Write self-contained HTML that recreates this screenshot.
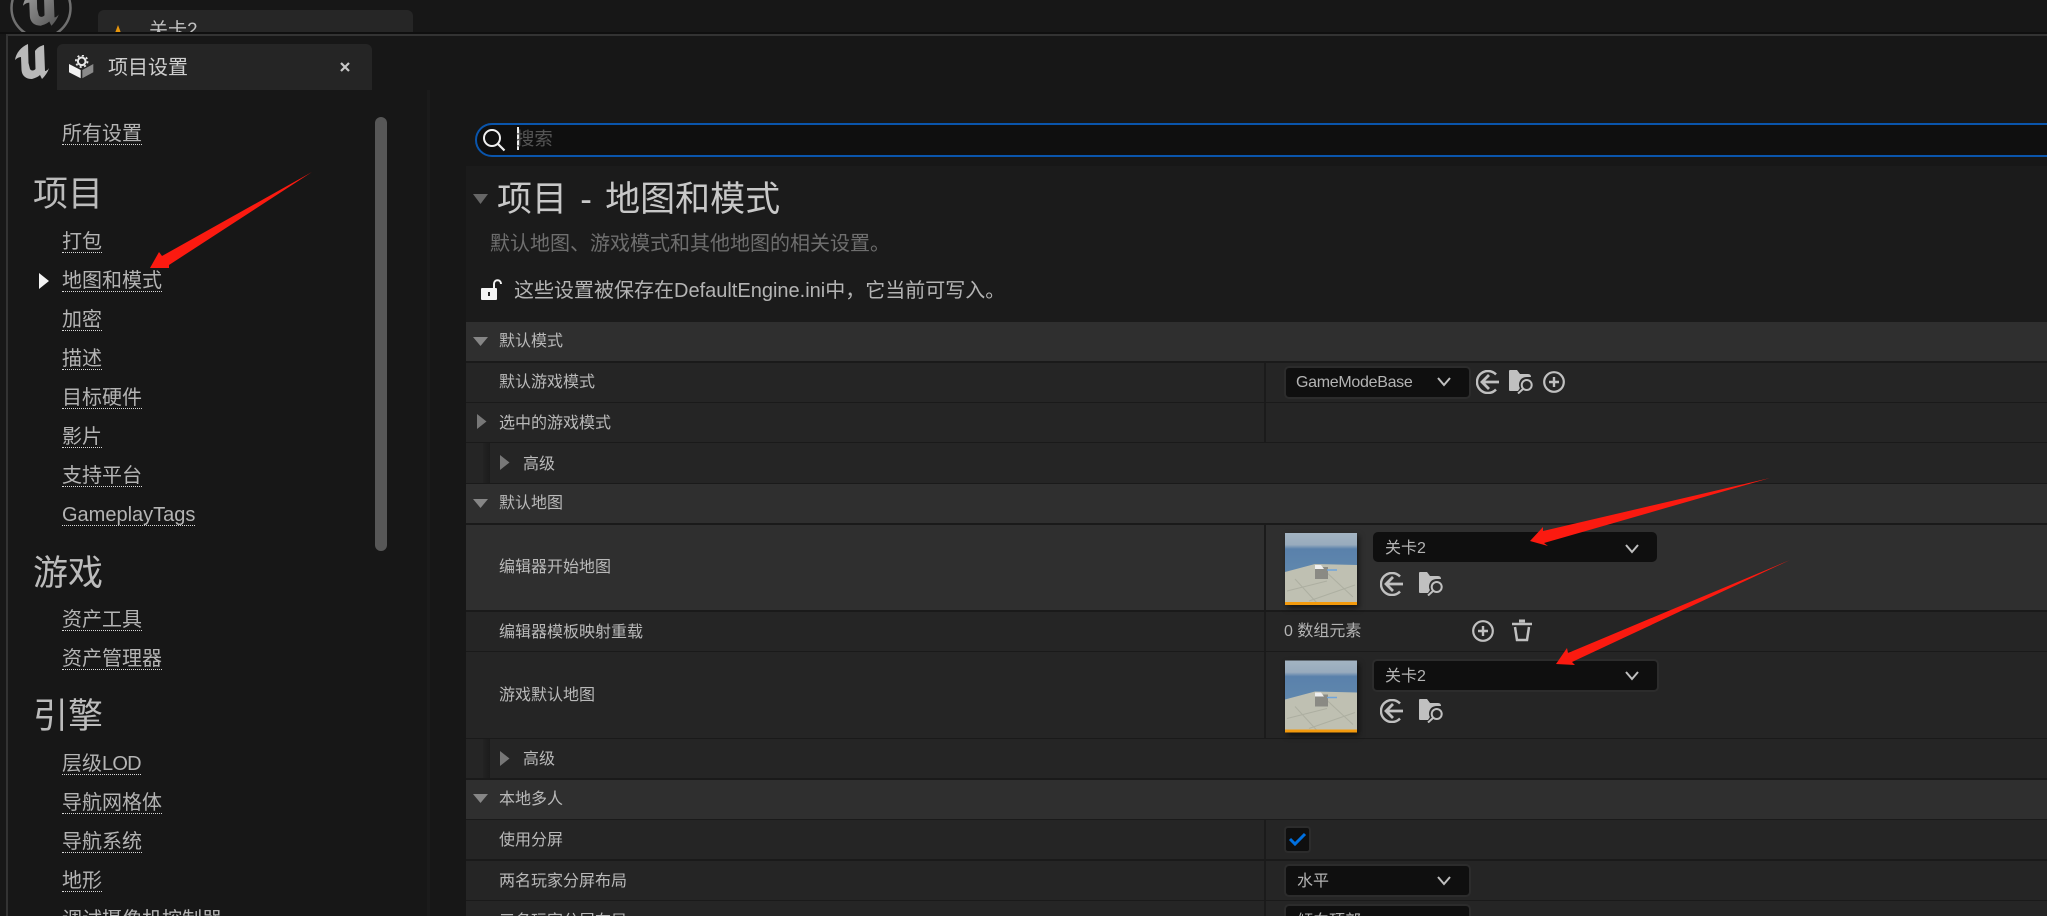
<!DOCTYPE html>
<html lang="zh-CN">
<head>
<meta charset="utf-8">
<title>项目设置</title>
<style>
html,body{margin:0;padding:0;background:#171717;}
#p{position:relative;width:2047px;height:916px;overflow:hidden;background:#171717;font-family:"Liberation Sans","Noto Sans CJK SC",sans-serif;color:#bdbdbd;}
#p div,#p span.a,#p svg{position:absolute;}
.t{white-space:nowrap;line-height:24px;height:24px;}
.n{left:62px;font-size:20px;color:#b4b4b4;border-bottom:1px dotted #d8d8d8;line-height:29px;height:24px;white-space:nowrap;}
.h{left:33px;font-size:35px;line-height:46px;height:44px;color:#bcbcbc;white-space:nowrap;}
.r{left:466px;width:1581px;background:#252525;}
.c{background:#2f2f2f;}
.l{left:499px;font-size:16px;color:#b9b9b9;line-height:22px;height:20px;white-space:nowrap;}
.s{left:1264px;width:2px;background:#1b1b1b;}
.d{background:#0f0f0f;border-radius:5px;box-sizing:border-box;}
.b{border:2px solid #2c2c2c;}
.v{font-size:16px;color:#b4b4b4;line-height:22px;height:20px;white-space:nowrap;}
.i{fill:none;stroke:#c0c0c0;}
</style>
</head>
<body>
<div id="p">

<!-- background app -->
<svg style="left:0;top:0" width="90" height="32" viewBox="0 0 90 32">
<defs><linearGradient id="lg" x1="0" y1="0" x2="1" y2="1"><stop offset="0" stop-color="#a0a0a0"/><stop offset="1" stop-color="#555"/></linearGradient></defs>
<circle cx="41" cy="8" r="29.500" fill="none" stroke="#6f6f6f" stroke-width="2.500"/>
<path transform="translate(23,-11) scale(1.050)" d="M13 0 C6 3 1 9 0 16 C2 14 4 13 6 13 L6.500 26 C7 32 11 35 17 35 C20 34 23 33 25 31 L27 35 C30 32 33 28 34 24 C33 26 31 27 30 27 L29 1 C25 2 22 4 20 7 L20.500 25 C19 27 16 27 15 25 L13.500 19Z" fill="url(#lg)"/></svg>
<div style="left:98px;top:10px;width:315px;height:24px;background:#262626;border-radius:6px 6px 0 0"></div>
<svg style="left:110px;top:22px" width="20" height="12"><path d="M8 3 L11 11 H5Z" fill="#e8960c"/></svg>
<div class="t" style="left:149px;top:19px;font-size:19px;color:#c0c0c0">关卡2</div>

<!-- window -->
<div style="left:0;top:32px;width:2047px;height:2px;background:#0f0f0f"></div>
<div style="left:6px;top:34px;width:2041px;height:882px;background:#171717;border-top:2px solid #333;border-left:2px solid #333;box-sizing:border-box"></div>

<!-- UE logo -->
<svg style="left:15px;top:44px" width="35" height="36" viewBox="0 0 35 36"><path d="M13 0 C6 3 1 9 0 16 C2 14 4 13 6 13 L6.500 26 C7 32 11 35 17 35 C20 34 23 33 25 31 L27 35 C30 32 33 28 34 24 C33 26 31 27 30 27 L29 1 C25 2 22 4 20 7 L20.500 25 C19 27 16 27 15 25 L13.500 19Z" fill="#b9b9b9"/></svg>

<!-- tab -->
<div style="left:57px;top:44px;width:315px;height:46px;background:#252525;border-radius:6px 6px 0 0"></div>
<svg style="left:68px;top:55px" width="27" height="25" viewBox="0 0 27 25">
<circle cx="13.700" cy="6.300" r="3.800" fill="none" stroke="#e8e8e8" stroke-width="2"/>
<circle cx="13.700" cy="6.300" r="5.800" fill="none" stroke="#e8e8e8" stroke-width="1.800" stroke-dasharray="2 2.550"/>
<path d="M1 9 L12.700 15 V23.300 L1 17.300Z" fill="#f2f2f2"/><path d="M14.300 15 L25.300 9 V17.300 L14.300 23.300Z" fill="#8a8a8a"/>
</svg>
<div class="t" style="left:108px;top:56px;font-size:20px;color:#cfcfcf">项目设置</div>
<svg style="left:339px;top:61px" width="12" height="12"><path d="M2 2 L10 10 M10 2 L2 10" stroke="#c8c8c8" stroke-width="2.200"/></svg>

<!-- sidebar -->
<div class="n" style="top:120px">所有设置</div>
<div class="h" style="top:172px">项目</div>
<div class="n" style="top:228px">打包</div>
<svg style="left:38px;top:272px" width="12" height="18"><path d="M1 1 L11 9 L1 17Z" fill="#f4f4f4"/></svg>
<div class="n" style="top:267px">地图和模式</div>
<div class="n" style="top:306px">加密</div>
<div class="n" style="top:345px">描述</div>
<div class="n" style="top:384px">目标硬件</div>
<div class="n" style="top:423px">影片</div>
<div class="n" style="top:462px">支持平台</div>
<div class="n" style="top:501px">GameplayTags</div>
<div class="h" style="top:551px">游戏</div>
<div class="n" style="top:606px">资产工具</div>
<div class="n" style="top:645px">资产管理器</div>
<div class="h" style="top:694px">引擎</div>
<div class="n" style="top:750px">层级<span style="letter-spacing:-.8px">LOD</span></div>
<div class="n" style="top:789px">导航网格体</div>
<div class="n" style="top:828px">导航系统</div>
<div class="n" style="top:867px">地形</div>
<div class="n" style="top:906px">调试摄像机控制器</div>
<div style="left:375px;top:117px;width:12px;height:434px;background:#575757;border-radius:6px"></div>
<div style="left:427px;top:90px;width:3px;height:826px;background:#1b1b1b"></div>

<!-- search -->
<div style="left:475px;top:123px;width:1600px;height:34px;box-sizing:border-box;background:#0f0f0f;border:2px solid #0a55ac;border-radius:17px"></div>
<svg style="left:480px;top:127px" width="26" height="25" viewBox="0 0 26 25"><circle cx="12" cy="11" r="8" fill="none" stroke="#f0f0f0" stroke-width="2"/><path d="M18 17 L24.500 23.500" stroke="#f0f0f0" stroke-width="2.200"/></svg>
<div style="left:517px;top:127px;width:2px;height:23px;background:#f0f0f0"></div>
<div class="t" style="left:516px;top:127px;font-size:18.400px;color:#555">搜索</div>

<!-- content head -->
<div style="left:466px;top:166px;width:1581px;height:156px;background:#1b1b1b"></div>
<svg style="left:473px;top:194px" width="16" height="10"><path d="M0 0 H15 L7.500 10Z" fill="#666"/></svg>
<div class="t" style="left:497px;top:178px;font-size:35px;line-height:44px;height:44px;color:#c8c8c8;word-spacing:3.500px">项目 - 地图和模式</div>
<div class="t" style="left:490px;top:232px;font-size:20px;color:#6e6e6e">默认地图、游戏模式和其他地图的相关设置。</div>
<svg style="left:480px;top:278px" width="23" height="23" viewBox="0 0 23 23"><path d="M14 10 V6 C14 1 21 1 21 6" fill="none" stroke="#f2f2f2" stroke-width="2"/><rect x="1" y="10" width="16" height="12" rx="1" fill="#f4f4f4"/><rect x="8" y="14" width="2" height="4" fill="#222"/></svg>
<div class="t" style="left:514px;top:279px;font-size:20px;color:#b4b4b4">这些设置被保存在DefaultEngine.ini中，它当前可写入。</div>

<!-- rows -->
<div style="left:466px;top:322px;width:1581px;height:594px;background:#1a1a1a"></div>
<div class="r c" style="top:322px;height:39px"></div>
<div class="r" style="top:363px;height:39px"></div>
<div class="r" style="top:403px;height:39px"></div>
<div class="r" style="top:443px;height:40px"></div>
<div class="r c" style="top:484px;height:39px"></div>
<div class="r c" style="top:525px;height:85px"></div>
<div class="r" style="top:612px;height:39px"></div>
<div class="r" style="top:652px;height:86px"></div>
<div class="r" style="top:739px;height:39px"></div>
<div class="r c" style="top:780px;height:39px"></div>
<div class="r" style="top:820px;height:39px"></div>
<div class="r" style="top:861px;height:39px"></div>
<div class="r" style="top:901px;height:15px"></div>
<div style="left:483px;top:443px;width:7px;height:40px;background:linear-gradient(90deg,#222,#1c1c1c)"></div>
<div style="left:483px;top:739px;width:7px;height:39px;background:linear-gradient(90deg,#222,#1c1c1c)"></div>
<div class="s" style="top:363px;height:39px"></div>
<div class="s" style="top:403px;height:39px"></div>
<div class="s" style="top:525px;height:85px"></div>
<div class="s" style="top:612px;height:39px"></div>
<div class="s" style="top:652px;height:86px"></div>
<div class="s" style="top:820px;height:39px"></div>
<div class="s" style="top:861px;height:39px"></div>
<div class="s" style="top:901px;height:15px"></div>

<svg style="left:473px;top:337px" width="16" height="10"><path d="M0 0 H15 L7.500 9Z" fill="#868686"/></svg>
<svg style="left:473px;top:499px" width="16" height="10"><path d="M0 0 H15 L7.500 9Z" fill="#868686"/></svg>
<svg style="left:473px;top:794px" width="16" height="10"><path d="M0 0 H15 L7.500 9Z" fill="#868686"/></svg>
<svg style="left:477px;top:414px" width="10" height="16"><path d="M0 0 L9.500 7.500 L0 15Z" fill="#777"/></svg>
<svg style="left:500px;top:455px" width="10" height="16"><path d="M0 0 L9.500 7.500 L0 15Z" fill="#777"/></svg>
<svg style="left:500px;top:751px" width="10" height="16"><path d="M0 0 L9.500 7.500 L0 15Z" fill="#777"/></svg>

<div class="l" style="top:331px">默认模式</div>
<div class="l" style="top:372px">默认游戏模式</div>
<div class="l" style="top:413px">选中的游戏模式</div>
<div class="l" style="left:523px;top:454px">高级</div>
<div class="l" style="top:493px">默认地图</div>
<div class="l" style="top:557px">编辑器开始地图</div>
<div class="l" style="top:622px">编辑器模板映射重载</div>
<div class="l" style="top:685px">游戏默认地图</div>
<div class="l" style="left:523px;top:749px">高级</div>
<div class="l" style="top:789px">本地多人</div>
<div class="l" style="top:830px">使用分屏</div>
<div class="l" style="top:871px">两名玩家分屏布局</div>
<div class="l" style="top:911px">三名玩家分屏布局</div>

<!-- default game mode -->
<div class="d b" style="left:1284px;top:366px;width:187px;height:33px"></div>
<div class="v" style="left:1296px;top:372px;letter-spacing:-.3px">GameModeBase</div>
<svg class="i" style="left:1436px;top:376px" width="16" height="12"><path d="M2 2 L8 9 L14 2" stroke-width="2"/></svg>
<svg class="i" style="left:1476px;top:370px" width="24" height="24"><path d="M20 4.500 A11 11 0 1 0 20 19.500" stroke-width="2.400"/><path d="M23 12 H6 M13 5 L6 12 L13 19" stroke-width="2.800"/></svg>
<svg style="left:1509px;top:370px" width="24" height="24"><path d="M0 1 Q0 0 1 0 H8 L11 4 H19 Q22 4 22 7 H18 Q11 7 10 14 Q10 17 11 18 L9 21 H1 Q0 21 0 20Z" fill="#c0c0c0"/><circle cx="17.700" cy="15" r="5" fill="none" stroke="#c0c0c0" stroke-width="2"/><path d="M14 19 L9 23.500" stroke="#c0c0c0" stroke-width="2"/></svg>
<svg class="i" style="left:1543px;top:371px" width="22" height="22"><circle cx="11" cy="11" r="9.800" stroke-width="2.200"/><path d="M11 6 V16 M6 11 H16" stroke-width="2.400"/></svg>

<!-- start map -->
<svg style="left:1285px;top:533px;filter:drop-shadow(2px 3px 3px rgba(0,0,0,.55))" width="72" height="72" viewBox="0 0 72 72">
<defs><linearGradient id="g" x1="0" y1="0" x2="0" y2="1"><stop offset="0" stop-color="#a3b4c2"/><stop offset=".28" stop-color="#98abbd"/><stop offset=".38" stop-color="#5a81ab"/><stop offset="1" stop-color="#6088ae"/></linearGradient></defs>
<rect width="72" height="42" fill="url(#g)"/><path d="M0 39 L30 31 L72 32 V72 H0Z" fill="#bfc0b2"/><path d="M10 46 L32 70 M40 38 L68 64 M2 58 L42 48 M24 68 L70 52" stroke="#adafa1" fill="none"/><path d="M30 34 H43 V46 H30Z" fill="#8a8a84"/><path d="M30 32 H36 L39 36 H30Z" fill="#f0f0f0"/><path d="M42 37 H52" stroke="#6ea4dc" stroke-width="1.500"/><rect y="69" width="72" height="3" fill="#f39a0d"/></svg>
<div class="d" style="left:1373px;top:532px;width:284px;height:30px"></div>
<div class="v" style="left:1385px;top:538px">关卡2</div>
<svg class="i" style="left:1624px;top:543px" width="16" height="12"><path d="M2 2 L8 9 L14 2" stroke-width="2"/></svg>
<svg class="i" style="left:1380px;top:572px" width="24" height="24"><path d="M20 4.500 A11 11 0 1 0 20 19.500" stroke-width="2.400"/><path d="M23 12 H6 M13 5 L6 12 L13 19" stroke-width="2.800"/></svg>
<svg style="left:1419px;top:572px" width="24" height="24"><path d="M0 1 Q0 0 1 0 H8 L11 4 H19 Q22 4 22 7 H18 Q11 7 10 14 Q10 17 11 18 L9 21 H1 Q0 21 0 20Z" fill="#c0c0c0"/><circle cx="17.700" cy="15" r="5" fill="none" stroke="#c0c0c0" stroke-width="2"/><path d="M14 19 L9 23.500" stroke="#c0c0c0" stroke-width="2"/></svg>

<!-- array -->
<div class="v" style="left:1284px;top:621px">0 数组元素</div>
<svg class="i" style="left:1472px;top:620px" width="22" height="22"><circle cx="11" cy="11" r="9.800" stroke-width="2.200"/><path d="M11 6 V16 M6 11 H16" stroke-width="2.400"/></svg>
<svg class="i" style="left:1512px;top:619px" width="20" height="23"><path d="M0 5 H20" stroke-width="2.500"/><path d="M7 2 H13" stroke-width="3"/><path d="M3 8 L5 21 H15 L17 8" stroke-width="2.500"/></svg>

<!-- game default map -->
<svg style="left:1285px;top:660px;filter:drop-shadow(2px 3px 3px rgba(0,0,0,.55))" width="72" height="73" viewBox="0 0 72 72">
<rect width="72" height="42" fill="url(#g)"/><path d="M0 39 L30 31 L72 32 V72 H0Z" fill="#bfc0b2"/><path d="M10 46 L32 70 M40 38 L68 64 M2 58 L42 48 M24 68 L70 52" stroke="#adafa1" fill="none"/><path d="M30 34 H43 V46 H30Z" fill="#8a8a84"/><path d="M30 32 H36 L39 36 H30Z" fill="#f0f0f0"/><path d="M42 37 H52" stroke="#6ea4dc" stroke-width="1.500"/><rect y="69" width="72" height="3" fill="#f39a0d"/></svg>
<div class="d b" style="left:1372px;top:659px;width:287px;height:33px"></div>
<div class="v" style="left:1385px;top:666px">关卡2</div>
<svg class="i" style="left:1624px;top:670px" width="16" height="12"><path d="M2 2 L8 9 L14 2" stroke-width="2"/></svg>
<svg class="i" style="left:1380px;top:699px" width="24" height="24"><path d="M20 4.500 A11 11 0 1 0 20 19.500" stroke-width="2.400"/><path d="M23 12 H6 M13 5 L6 12 L13 19" stroke-width="2.800"/></svg>
<svg style="left:1419px;top:699px" width="24" height="24"><path d="M0 1 Q0 0 1 0 H8 L11 4 H19 Q22 4 22 7 H18 Q11 7 10 14 Q10 17 11 18 L9 21 H1 Q0 21 0 20Z" fill="#c0c0c0"/><circle cx="17.700" cy="15" r="5" fill="none" stroke="#c0c0c0" stroke-width="2"/><path d="M14 19 L9 23.500" stroke="#c0c0c0" stroke-width="2"/></svg>

<!-- checkbox & dropdowns -->
<div class="d b" style="left:1284px;top:826px;width:27px;height:27px;border-radius:4px"></div>
<svg style="left:1288px;top:832px" width="19" height="15"><path d="M2 7 L7 12 L17 2" fill="none" stroke="#0070e0" stroke-width="3"/></svg>
<div class="d b" style="left:1284px;top:864px;width:187px;height:33px"></div>
<div class="v" style="left:1297px;top:871px">水平</div>
<svg class="i" style="left:1436px;top:875px" width="16" height="12"><path d="M2 2 L8 9 L14 2" stroke-width="2"/></svg>
<div class="d b" style="left:1284px;top:904px;width:187px;height:33px"></div>
<div class="v" style="left:1297px;top:911px">倾向顶部</div>

<!-- red arrows -->
<svg style="left:0;top:0" width="2047" height="916">
<path d="M312 172 L162 256 L159 252 L150 268 L169 268 L169 265 Z" fill="#fb1a10"/>
<path d="M1770 478 L1543 531 L1543 527 L1530 541 L1548 546 L1544 543 Z" fill="#fb1a10"/>
<path d="M1790 560 L1568 653 L1567 648 L1556 664 L1575 665 L1572 662 Z" fill="#fb1a10"/>
</svg>
</div>
</body>
</html>
